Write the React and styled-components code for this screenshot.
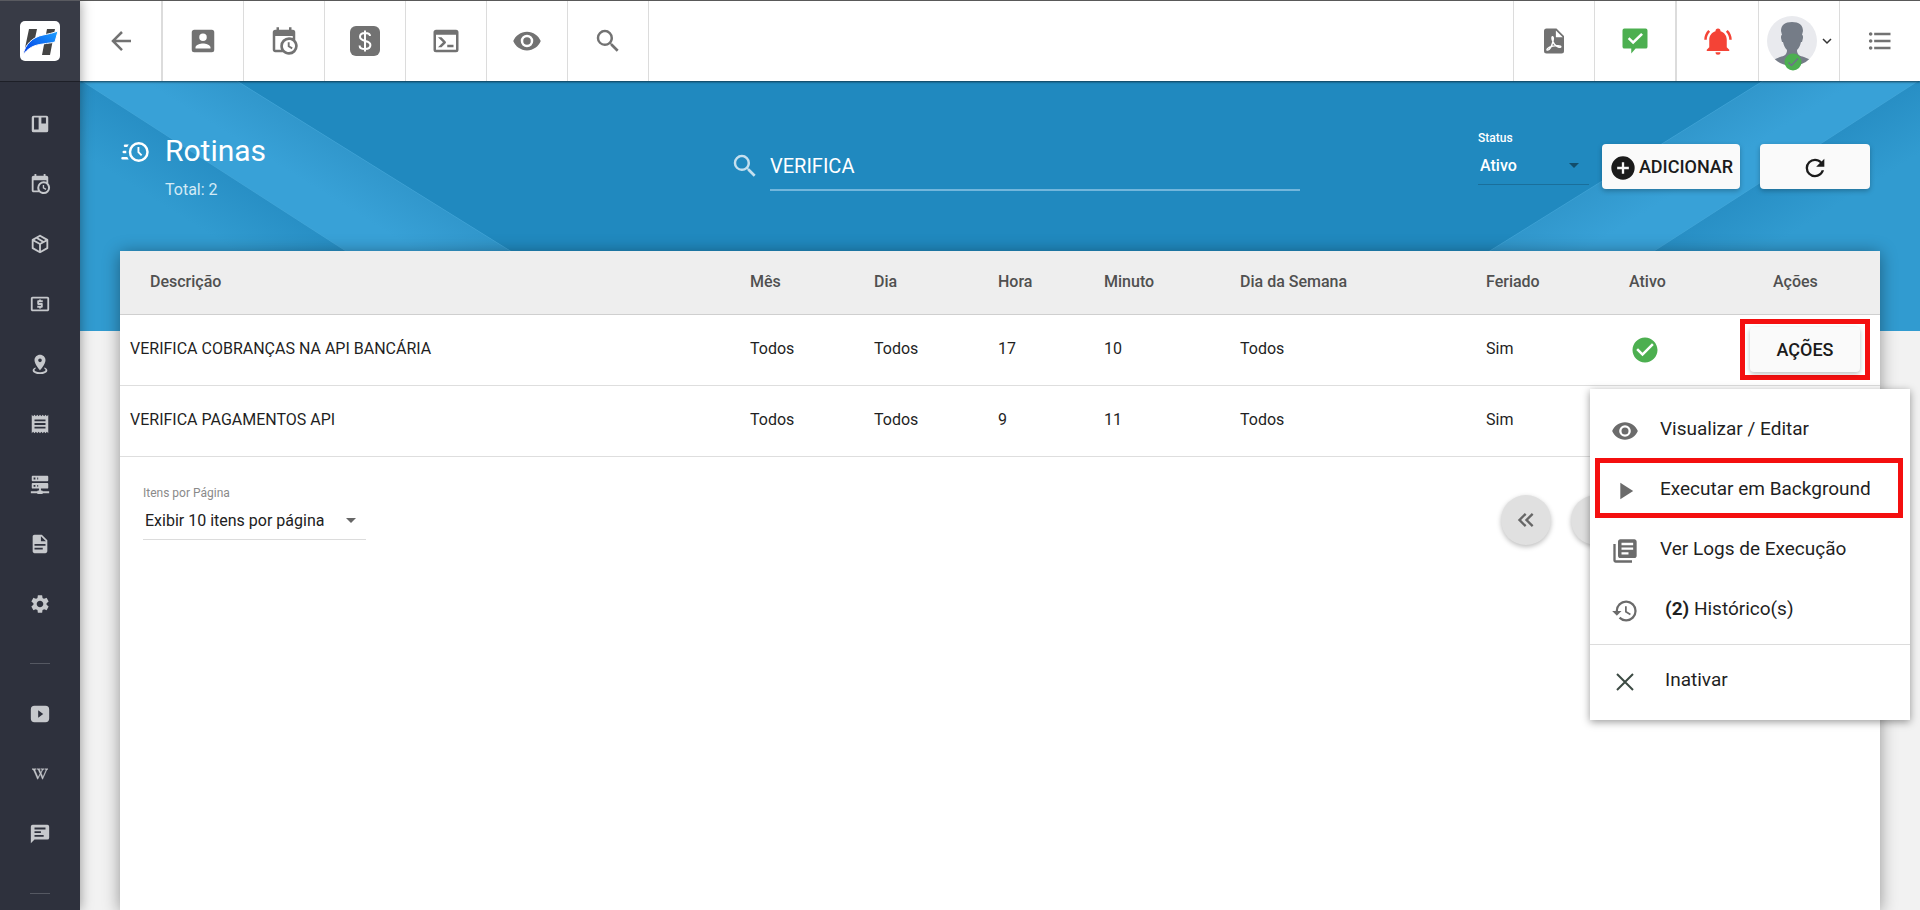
import React, { useState } from "react";
import styled, { createGlobalStyle } from "styled-components";
import {
  MdFormatListBulleted,
  MdHistory,
  MdLibraryBooks,
  MdPlayArrow,
  MdReceipt,
  MdLocalAtm,
  MdSettings,
} from "react-icons/md";
import { FaWikipediaW } from "react-icons/fa";

const GlobalStyle = createGlobalStyle`
  * {
    box-sizing: border-box;
  }
  body {
    margin: 0;
    background-color: #f2f2f2;
    color: #1f1f1f;
    font-family: Roboto, "Liberation Sans", sans-serif;
    font-size: 16px;
  }
  button, input, select {
    font-family: inherit;
    color: inherit;
  }
  svg {
    display: block;
    flex-shrink: 0;
  }
`;

const paths = {
  back: "M20,11V13H8L13.5,18.5L12.08,19.92L4.16,12L12.08,4.08L13.5,5.5L8,11H20Z",
  account:
    "M6,17C6,15 10,13.9 12,13.9C14,13.9 18,15 18,17V18H6M15,9A3,3 0 0,1 12,12A3,3 0 0,1 9,9A3,3 0 0,1 12,6A3,3 0 0,1 15,9M3,5V19A2,2 0 0,0 5,21H19A2,2 0 0,0 21,19V5A2,2 0 0,0 19,3H5C3.89,3 3,3.9 3,5Z",
  calendar:
    "M15,13H16.5V15.82L18.94,17.23L18.19,18.53L15,16.69V13M19,8H5V19H9.67C9.24,18.09 9,17.07 9,16A7,7 0 0,1 16,9C17.07,9 18.09,9.24 19,9.67V8M5,21C3.89,21 3,20.1 3,19V5C3,3.89 3.89,3 5,3H6V1H8V3H16V1H18V3H19A2,2 0 0,1 21,5V11.1C22.24,12.36 23,14.09 23,16A7,7 0 0,1 16,23C14.09,23 12.36,22.24 11.1,21H5M16,11.15A4.85,4.85 0 0,0 11.15,16C11.15,18.68 13.32,20.85 16,20.85A4.85,4.85 0 0,0 20.85,16C20.85,13.32 18.68,11.15 16,11.15Z",
  console:
    "M20,19V7H4V19H20M20,3A2,2 0 0,1 22,5V19A2,2 0 0,1 20,21H4A2,2 0 0,1 2,19V5C2,3.89 2.9,3 4,3H20M13,17V15H18V17H13M9.58,13L5.57,9H8.4L11.7,12.3C12.09,12.69 12.09,13.33 11.7,13.72L8.42,17H5.59L9.58,13Z",
  eye: "M12,9A3,3 0 0,0 9,12A3,3 0 0,0 12,15A3,3 0 0,0 15,12A3,3 0 0,0 12,9M12,17A5,5 0 0,1 7,12A5,5 0 0,1 12,7A5,5 0 0,1 17,12A5,5 0 0,1 12,17M12,4.5C7,4.5 2.73,7.61 1,12C2.73,16.39 7,19.5 12,19.5C17,19.5 21.27,16.39 23,12C21.27,7.61 17,4.5 12,4.5Z",
  magnify:
    "M9.5,3A6.5,6.5 0 0,1 16,9.5C16,11.11 15.41,12.59 14.44,13.73L14.71,14H15.5L20.5,19L19,20.5L14,15.5V14.71L13.73,14.44C12.59,15.41 11.11,16 9.5,16A6.5,6.5 0 0,1 3,9.5A6.5,6.5 0 0,1 9.5,3M9.5,5C7,5 5,7 5,9.5C5,12 7,14 9.5,14C12,14 14,12 14,9.5C14,7 12,5 9.5,5Z",
  messageCheck:
    "M3.5,2H20.5A1.5,1.5 0 0,1 22,3.5V16.5A1.5,1.5 0 0,1 20.5,18H12.5L9,22V18H3.5A1.5,1.5 0 0,1 2,16.5V3.5A1.5,1.5 0 0,1 3.5,2M10.5,14.6L18.4,7L16.9,5.5L10.5,11.7L7.6,8.9L6.2,10.3L10.5,14.6Z",
  bell: "M21,19V20H3V19L5,17V11C5,7.9 7.03,5.17 10,4.29C10,4.19 10,4.1 10,4A2,2 0 0,1 12,2A2,2 0 0,1 14,4C14,4.1 14,4.19 14,4.29C16.97,5.17 19,7.9 19,11V17L21,19M14,21A2,2 0 0,1 12,23A2,2 0 0,1 10,21M19.75,3.19L18.33,4.61C20.04,6.3 21,8.6 21,11H23C23,8.07 21.84,5.25 19.75,3.19M1,11H3C3,8.6 3.96,6.3 5.67,4.61L4.25,3.19C2.16,5.25 1,8.07 1,11Z",
  board:
    "M5,3H19A2,2 0 0,1 21,5V19A2,2 0 0,1 19,21H5A2,2 0 0,1 3,19V5A2,2 0 0,1 5,3M5.5,5V18H10.5V5H5.5M13.5,5V11.5H18.5V5H13.5Z",
  box: "M21,16.5C21,16.88 20.79,17.21 20.47,17.38L12.57,21.82C12.41,21.94 12.21,22 12,22C11.79,22 11.59,21.94 11.43,21.82L3.53,17.38C3.21,17.21 3,16.88 3,16.5V7.5C3,7.12 3.21,6.79 3.53,6.62L11.43,2.18C11.59,2.06 11.79,2 12,2C12.21,2 12.41,2.06 12.57,2.18L20.47,6.62C20.79,6.79 21,7.12 21,7.5V16.5M12,4.15L10.11,5.22L16,8.61L17.96,7.5L12,4.15M6.04,7.5L12,10.85L13.96,9.75L8.08,6.35L6.04,7.5M5,15.91L11,19.29V12.58L5,9.21V15.91M19,15.91V9.21L13,12.58V19.29L19,15.91Z",
  marker:
    "M12,2C15.31,2 18,4.66 18,7.95C18,12.41 12,19 12,19S6,12.41 6,7.95C6,4.66 8.69,2 12,2M12,6A2,2 0 0,0 10,8A2,2 0 0,0 12,10A2,2 0 0,0 14,8A2,2 0 0,0 12,6M20,19C20,21.21 16.42,23 12,23C7.58,23 4,21.21 4,19C4,17.71 5.22,16.56 7.11,15.83L7.75,16.74C6.67,17.19 6,17.81 6,18.5C6,19.88 8.69,21 12,21C15.31,21 18,19.88 18,18.5C18,17.81 17.33,17.19 16.25,16.74L16.89,15.83C18.78,16.56 20,17.71 20,19Z",
  server:
    "M13,19H14A1,1 0 0,1 15,20H22V22H15A1,1 0 0,1 14,23H10A1,1 0 0,1 9,22H2V20H9A1,1 0 0,1 10,19H11V17H4A1,1 0 0,1 3,16V12A1,1 0 0,1 4,11H20A1,1 0 0,1 21,12V16A1,1 0 0,1 20,17H13V19M4,3H20A1,1 0 0,1 21,4V8A1,1 0 0,1 20,9H4A1,1 0 0,1 3,8V4A1,1 0 0,1 4,3M9,7H10V5H9V7M9,15H10V13H9V15M5,5V7H7V5H5M5,13V15H7V13H5Z",
  file: "M13,9H18.5L13,3.5V9M6,2H14L20,8V20A2,2 0 0,1 18,22H6C4.89,22 4,21.1 4,20V4C4,2.89 4.89,2 6,2M15,18V16H6V18H15M18,14V12H6V14H18Z",
  video:
    "M6,3H18A4,4 0 0,1 22,7V17A4,4 0 0,1 18,21H6A4,4 0 0,1 2,17V7A4,4 0 0,1 6,3M10,8V16L15.5,12L10,8Z",
  message:
    "M4,2H20A2,2 0 0,1 22,4V16A2,2 0 0,1 20,18H6L2,22V4A2,2 0 0,1 4,2M6,5V7H18V5H6M6,9V11H13V9H6M6,13V15H16V13H6Z",
  clockFast:
    "M15,4A8,8 0 0,1 23,12A8,8 0 0,1 15,20A8,8 0 0,1 7,12A8,8 0 0,1 15,4M15,6A6,6 0 0,0 9,12A6,6 0 0,0 15,18A6,6 0 0,0 21,12A6,6 0 0,0 15,6M14,8H15.5V11.78L17.83,14.11L16.77,15.17L14,12.4V8M2,18A1,1 0 0,1 1,17A1,1 0 0,1 2,16H5.83C6.14,16.71 6.54,17.38 7,18H2M3,13A1,1 0 0,1 2,12A1,1 0 0,1 3,11H5.05L5,12L5.05,13H3M4,8A1,1 0 0,1 3,7A1,1 0 0,1 4,6H7C6.54,6.62 6.14,7.29 5.83,8H4Z",
  plusCircle:
    "M17,13H13V17H11V13H7V11H11V7H13V11H17M12,2A10,10 0 0,0 2,12A10,10 0 0,0 12,22A10,10 0 0,0 22,12A10,10 0 0,0 12,2Z",
  checkCircle:
    "M12 2C6.5 2 2 6.5 2 12S6.5 22 12 22 22 17.5 22 12 17.5 2 12 2M10 17L5 12L6.41 10.59L10 14.17L17.59 6.58L19 8L10 17Z",
  refresh:
    "M17.65,6.35C16.2,4.9 14.21,4 12,4A8,8 0 0,0 4,12A8,8 0 0,0 12,20C15.73,20 18.84,17.45 19.73,14H17.65C16.83,16.33 14.61,18 12,18A6,6 0 0,1 6,12A6,6 0 0,1 12,6C13.66,6 15.14,6.69 16.22,7.78L13,11H20V4L17.65,6.35Z",
  first:
    "M18.41,7.41L17,6L11,12L17,18L18.41,16.59L13.83,12L18.41,7.41M12.41,7.41L11,6L5,12L11,18L12.41,16.59L7.83,12L12.41,7.41Z",
  prev: "M15.41,16.58L10.83,12L15.41,7.41L14,6L8,12L14,18L15.41,16.58Z",
  next: "M8.59,16.58L13.17,12L8.59,7.41L10,6L16,12L10,18L8.59,16.58Z",
  last: "M5.59,7.41L7,6L13,12L7,18L5.59,16.59L10.17,12L5.59,7.41M11.59,7.41L13,6L19,12L13,18L11.59,16.59L16.17,12L11.59,7.41Z",
};

const Icon = ({ name, size = 30 }) => (
  <svg width={size} height={size} viewBox="0 0 24 24" aria-hidden="true">
    <path d={paths[name]} fill="currentColor" fillRule="evenodd" />
  </svg>
);

const DollarIcon = () => (
  <svg width="30" height="30" viewBox="0 0 30 30" aria-hidden="true">
    <rect width="30" height="30" rx="6" fill="currentColor" />
    <path
      d="M15 4.5v21M20 10c0-2-2-3-5-3s-5 1.3-5 3.8c0 5.700 10.400 2.600 10.400 8.200 0 2.700-2.400 4-5.400 4s-5.400-1.300-5.400-3.600"
      fill="none"
      stroke="#fff"
      strokeWidth="2"
    />
  </svg>
);

const PdfIcon = () => (
  <svg width="30" height="30" viewBox="0 0 24 24" aria-hidden="true">
    <path
      d="M6 2h8l6 6v12a2 2 0 0 1-2 2H6a2 2 0 0 1-2-2V4a2 2 0 0 1 2-2zM13.500 3.500V9H19z"
      fill="currentColor"
      fillRule="evenodd"
    />
    <path
      d="M10.700 8.500c1.200 0 .8 2.200.4 3.800.8 2.200 2.200 3.300 3.400 3.900M11.300 12c-.8 3-2.700 7-4.300 7.300-1.500.2-.5-2.300 4-3.200 2.500-.5 6.500-.6 6.500.5s-2.600.3-4-.8c-1.500-1.200-3-4.300-3.200-6.200 0-.7.100-1.100.4-1.100z"
      fill="none"
      stroke="#fff"
      strokeWidth="1.100"
    />
  </svg>
);

const CloseIcon = () => (
  <svg width="28" height="28" viewBox="0 0 28 28" aria-hidden="true">
    <path d="M6 6l16 16M22 6L6 22" stroke="#3c4a43" strokeWidth="2" />
  </svg>
);

const ChevronIcon = () => (
  <svg width="10" height="8" viewBox="0 0 10 8" aria-hidden="true">
    <path d="M1 2l4 4 4-4" fill="none" stroke="#333" strokeWidth="1.500" />
  </svg>
);

const OnlineIcon = () => (
  <svg width="18" height="18" viewBox="0 0 18 18" aria-hidden="true">
    <circle cx="9" cy="9" r="8.500" fill="#4caf50" />
    <path d="M4.500 9.500l3 3 6.500-7" fill="none" stroke="#6f6f8c" strokeWidth="1.400" />
  </svg>
);

const LogoMark = () => (
  <svg width="40" height="40" viewBox="0 0 40 40" aria-hidden="true">
    <defs>
      <linearGradient id="swoosh" x1="0" y1="1" x2="1" y2="0">
        <stop offset="0" stopColor="#0038e0" />
        <stop offset="0.600" stopColor="#1278f5" />
        <stop offset="1" stopColor="#1fa2ff" />
      </linearGradient>
    </defs>
    <rect width="40" height="40" rx="5" fill="#fff" />
    <path d="M9 8h8l-3 14-9 5zM27 8h8l-5 26h-8z" fill="#444" />
    <path
      d="M3 34C5 23 13 16 23 14c5-1 10-2 15-4l-3 11c-3 1-7 1-12 2C14 24 8 27 3 34z"
      fill="url(#swoosh)"
      stroke="#fff"
      strokeWidth="1"
    />
  </svg>
);

const AvatarPicture = () => (
  <svg width="50" height="50" viewBox="0 0 50 50" aria-hidden="true">
    <defs>
      <clipPath id="face">
        <circle cx="25" cy="25" r="25" />
      </clipPath>
    </defs>
    <g clipPath="url(#face)">
      <rect width="50" height="50" fill="#e9eaee" />
      <path
        d="M14 15c0-6 4-9 11-9s11 3 11 9l-1 4c1 0 1 1 1 3l-1 4h-1c-1 4-2 6-4 8 0 5 3 6 7 7l7 3-5 6H10l-4-6 7-3c4-1 7-2 7-7-2-2-3-4-4-8h-1l-1-4c0-2 0-3 1-3z"
        fill="#757c87"
      />
    </g>
  </svg>
);

const Shell = styled.div`
  display: flex;
  height: 100vh;
  overflow: hidden;
`;

const Sidebar = styled.aside`
  display: flex;
  flex-direction: column;
  flex: 0 0 80px;
  overflow: hidden;
  background-color: #2e313d;
  color: #c6c8cc;
  box-shadow: 0 0 12px rgba(0, 0, 0, 0.4);
  z-index: 3;
`;

const LogoLink = styled.a`
  display: flex;
  align-items: center;
  justify-content: center;
  flex: 0 0 82px;
  background-color: #383b46;
  border-top: 1px solid #595a60;
  border-bottom: 1px solid #1d1f27;
`;

const SideNav = styled.nav`
  display: flex;
  flex-direction: column;
  padding-top: 12px;
`;

const SideLink = styled.a`
  display: flex;
  align-items: center;
  justify-content: center;
  height: 60px;
  color: inherit;
`;

const WikiIcon = styled(FaWikipediaW)`
  stroke: currentColor;
  stroke-width: 16px;
`;

const SideDivider = styled.hr`
  width: 20px;
  height: 1px;
  margin: 29px auto 20px;
  border: 0;
  background-color: #555862;
`;

const Main = styled.div`
  display: flex;
  flex-direction: column;
  flex: 1;
  min-width: 0;
`;

const TopBar = styled.header`
  display: flex;
  justify-content: space-between;
  flex: 0 0 81px;
  background-color: #fff;
  border-top: 1px solid #595959;
  box-shadow: 0 1px 2px rgba(0, 0, 0, 0.6);
  z-index: 2;
`;

const TopGroup = styled.div`
  display: flex;
`;

const TopButton = styled.button`
  display: flex;
  align-items: center;
  justify-content: center;
  gap: 5px;
  width: ${(props) => (props.$thick ? "83px" : "81px")};
  padding: 0;
  border: 0;
  border-${(props) => props.$side}: ${(props) => (props.$thick ? "2px" : "1px")} solid #dcdcdc;
  background: none;
  color: ${(props) => props.$color || "#727272"};
`;

const Avatar = styled.span`
  position: relative;
`;

const OnlineBadge = styled.span`
  position: absolute;
  left: 17px;
  bottom: -5px;
`;

const Hero = styled.section`
  position: relative;
  height: 250px;
  flex-shrink: 0;
  background-color: #319bd0;
  color: #fff;
`;

const HeroArt = styled.svg`
  position: absolute;
  inset: 0;
  width: 100%;
  height: 100%;
`;

const HeroContent = styled.div`
  position: relative;
  display: grid;
  grid-template-columns: 1fr 570px 570px;
  height: 170px;
  padding: 0 50px 0 40px;
`;

const TitleArea = styled.div`
  display: flex;
  gap: 15px;
  padding-top: 52px;
`;

const TitleIcon = styled.span`
  padding-top: 4px;
`;

const Title = styled.h1`
  margin: 0;
  font-size: 30px;
  line-height: 36px;
  font-weight: 400;
`;

const Total = styled.p`
  margin: 11px 0 0;
  font-size: 16px;
  line-height: 20px;
  color: #d3eaf6;
`;

const SearchArea = styled.label`
  display: flex;
  align-items: flex-start;
  gap: 10px;
  padding-top: 70px;
  color: #c5e0ef;
`;

const SearchInput = styled.input`
  flex: 1;
  min-width: 0;
  height: 40px;
  padding: 0 0 9px;
  border: 0;
  border-bottom: 2px solid #72b6dc;
  outline: none;
  background: none;
  color: #fff;
  font-size: 20px;
`;

const HeroActions = styled.div`
  display: flex;
  justify-content: flex-end;
  padding-top: 48px;
`;

const Field = styled.label`
  display: flex;
  flex-direction: column;
  width: ${(props) => props.$width};
  font-size: 12px;
  line-height: 18px;
  font-weight: ${(props) => (props.$light ? 400 : 500)};
  color: ${(props) => (props.$light ? "#8a8a8a" : "#fff")};
`;

const SelectBox = styled.span`
  display: flex;
  align-items: center;
  height: 38px;
  padding-right: 10px;
  border-bottom: 1px solid ${(props) => (props.$light ? "#dcdcdc" : "#1a6f9b")};
  color: ${(props) => (props.$light ? "#212121" : "#fff")};

  &::after {
    content: "";
    border: 5px solid transparent;
    border-top-color: ${(props) => (props.$light ? "#666" : "#124d6b")};
    border-bottom: 0;
  }
`;

const Select = styled.select`
  flex: 1;
  min-width: 0;
  padding: 0 0 0 2px;
  border: 0;
  appearance: none;
  background: none;
  font-size: 16px;
  font-weight: inherit;

  option {
    color: #212121;
  }
`;

const RaisedButton = styled.button`
  display: flex;
  align-items: center;
  justify-content: center;
  gap: 2px;
  width: ${(props) => props.$width || "110px"};
  height: 45px;
  padding: 0;
  border: 0;
  border-radius: 4px;
  background-color: #fafafa;
  color: #1b1b1b;
  font-size: 18px;
  font-weight: 500;
  box-shadow: 0 2px 5px rgba(0, 0, 0, 0.26);
`;

const ButtonIcon = styled.span`
  padding-top: 3px;
`;

const ButtonRow = styled.div`
  display: flex;
  gap: 20px;
  padding: 15px 0 0 13px;
`;

const Card = styled.section`
  position: relative;
  flex: 1 0 auto;
  margin: -80px 40px 0;
  background-color: #fff;
  box-shadow: 0 2px 16px rgba(0, 0, 0, 0.4);
`;

const Table = styled.table`
  width: 100%;
  table-layout: fixed;
  border-collapse: collapse;
`;

const Column = styled.col`
  width: ${(props) => props.$width};
`;

const HeadCell = styled.th`
  height: 63px;
  padding: 0 0 2px ${(props) => props.$indent || "10px"};
  border-bottom: 1px solid #cfcfcf;
  background-color: #eee;
  color: #505050;
  font-size: 16px;
  font-weight: 500;
  text-align: left;
`;

const Cell = styled.td`
  height: 71px;
  padding: 0 0 3px 10px;
  border-bottom: 1px solid #dedede;
  font-size: 16px;
`;

const StatusCell = styled(Cell)`
  padding: 0 0 0 11px;
  color: #4caf50;
`;

const ActionCell = styled(Cell)`
  padding: 0;
`;

const ActionAnchor = styled.div`
  position: relative;
  width: 130px;
`;

const ActionFrame = styled.div`
  padding: 3px 5px;
  border: 5px solid #f40f0f;
`;

const Menu = styled.ul`
  position: absolute;
  top: 70px;
  right: -40px;
  width: 320px;
  margin: 0;
  padding: 11px 0 9px;
  list-style: none;
  background-color: #fff;
  box-shadow: 0 2px 8px rgba(0, 0, 0, 0.4);
  z-index: 1;
`;

const MenuItem = styled.li`
  margin: ${(props) => (props.$marked ? "-2px 7px 2px 5px" : "0")};
  border: ${(props) => (props.$marked ? "5px solid #f40f0f" : "0")};
`;

const MenuButton = styled.button`
  display: flex;
  align-items: center;
  gap: 21px;
  width: 100%;
  height: ${(props) => (props.$marked ? "50px" : "60px")};
  padding: ${(props) => (props.$marked ? "5px 0 0 11px" : "1px 0 0 21px")};
  border: 0;
  background: none;
  color: #6b6b6b;
`;

const MenuText = styled.span`
  padding: 0 0 4px ${(props) => (props.$inset ? "5px" : "0")};
  color: #1f1f1f;
  font-size: 19px;
  line-height: 24px;
`;

const MenuDivider = styled.li`
  height: 1px;
  margin: 4px 0 6px;
  background-color: #dcdcdc;
`;

const TableFooter = styled.div`
  display: flex;
  align-items: flex-start;
  justify-content: space-between;
  padding: 27px 119px 0 23px;
`;

const Pager = styled.nav`
  display: flex;
  gap: 20px;
  padding-top: 11px;
`;

const PagerButton = styled.button`
  display: flex;
  align-items: center;
  justify-content: center;
  width: 50px;
  height: 50px;
  padding: 0;
  border: 0;
  border-radius: 50%;
  background-color: #e0e0e0;
  color: #666;
  box-shadow: 0 2px 5px rgba(0, 0, 0, 0.26);
`;

const columns = [
  { label: "Descrição", indent: "30px" },
  { label: "Mês", width: "124px" },
  { label: "Dia", width: "124px" },
  { label: "Hora", width: "106px" },
  { label: "Minuto", width: "136px" },
  { label: "Dia da Semana", width: "246px" },
  { label: "Feriado", width: "143px" },
  { label: "Ativo", width: "121px" },
  { label: "Ações", width: "140px", indent: "33px" },
];

const routines = [
  {
    id: 1,
    values: ["VERIFICA COBRANÇAS NA API BANCÁRIA", "Todos", "Todos", "17", "10", "Todos", "Sim"],
  },
  {
    id: 2,
    values: ["VERIFICA PAGAMENTOS API", "Todos", "Todos", "9", "11", "Todos", "Sim"],
  },
];

const sideItems = [
  ["Painel", <Icon name="board" size={22} />],
  ["Agenda", <Icon name="calendar" size={22} />],
  ["Produtos", <Icon name="box" size={22} />],
  ["Financeiro", <MdLocalAtm size={22} />],
  ["Mapa", <Icon name="marker" size={22} />],
  ["Notas", <MdReceipt size={22} />],
  ["Servidores", <Icon name="server" size={22} />],
  ["Documentos", <Icon name="file" size={22} />],
  ["Configurações", <MdSettings size={22} />],
];

const helpItems = [
  ["Vídeos", <Icon name="video" size={22} />],
  ["Wiki", <WikiIcon size={16} />],
  ["Mensagens", <Icon name="message" size={22} />],
];

const SideLinks = ({ items }) =>
  items.map(([label, icon]) => (
    <SideLink key={label} href="#" aria-label={label}>
      {icon}
    </SideLink>
  ));

const HeroBackground = () => (
  <HeroArt viewBox="0 0 1840 250" preserveAspectRatio="xMidYMin slice" aria-hidden="true">
    <defs>
      <linearGradient id="band" gradientUnits="userSpaceOnUse" x1="292" y1="84" x2="266" y2="126">
        <stop offset="0" stopColor="#3197cc" />
        <stop offset="1" stopColor="#38a1d7" />
      </linearGradient>
      <linearGradient id="edge" gradientUnits="userSpaceOnUse" x1="132" y1="84" x2="100" y2="135">
        <stop offset="0" stopColor="#288fc5" />
        <stop offset="1" stopColor="#319bd0" />
      </linearGradient>
      <g id="ribbon">
        <path d="M2 0L390 250H0V0z" fill="url(#edge)" />
        <path d="M2 0H157L559 250H390z" fill="url(#band)" />
        <path d="M2 0L390 250M157 0L559 250" stroke="#46a8da" strokeWidth="1" opacity="0.600" />
      </g>
    </defs>
    <path d="M157 0H1683L1281 250H559z" fill="#2089bf" />
    <use href="#ribbon" />
    <use href="#ribbon" transform="matrix(-1 0 0 1 1840 0)" />
  </HeroArt>
);

const ActionsMenu = () => (
  <Menu>
    <MenuItem>
      <MenuButton type="button">
        <Icon name="eye" size={28} />
        <MenuText>Visualizar / Editar</MenuText>
      </MenuButton>
    </MenuItem>
    <MenuItem $marked>
      <MenuButton type="button" $marked>
        <MdPlayArrow size={28} />
        <MenuText>Executar em Background</MenuText>
      </MenuButton>
    </MenuItem>
    <MenuItem>
      <MenuButton type="button">
        <MdLibraryBooks size={28} />
        <MenuText>Ver Logs de Execução</MenuText>
      </MenuButton>
    </MenuItem>
    <MenuItem>
      <MenuButton type="button">
        <MdHistory size={28} />
        <MenuText $inset>
          <b>(2)</b> Histórico(s)
        </MenuText>
      </MenuButton>
    </MenuItem>
    <MenuDivider role="separator" />
    <MenuItem>
      <MenuButton type="button">
        <CloseIcon />
        <MenuText $inset>Inativar</MenuText>
      </MenuButton>
    </MenuItem>
  </Menu>
);

const App = () => {
  const [search, setSearch] = useState("VERIFICA");
  const [openRow, setOpenRow] = useState(1);

  const toggleMenu = (id) => {
    setOpenRow(openRow === id ? null : id);
  };

  return (
    <>
      <GlobalStyle />
      <Shell>
        <Sidebar>
          <LogoLink href="#" aria-label="Início">
            <LogoMark />
          </LogoLink>
          <SideNav>
            <SideLinks items={sideItems} />
            <SideDivider />
            <SideLinks items={helpItems} />
            <SideDivider />
          </SideNav>
        </Sidebar>

        <Main>
          <TopBar>
            <TopGroup>
              <TopButton $side="right" $thick aria-label="Voltar">
                <Icon name="back" />
              </TopButton>
              <TopButton $side="right" aria-label="Clientes">
                <Icon name="account" />
              </TopButton>
              <TopButton $side="right" aria-label="Agenda">
                <Icon name="calendar" />
              </TopButton>
              <TopButton $side="right" aria-label="Financeiro">
                <DollarIcon />
              </TopButton>
              <TopButton $side="right" aria-label="Terminal">
                <Icon name="console" />
              </TopButton>
              <TopButton $side="right" aria-label="Monitorar">
                <Icon name="eye" />
              </TopButton>
              <TopButton $side="right" aria-label="Pesquisar">
                <Icon name="magnify" />
              </TopButton>
            </TopGroup>
            <TopGroup>
              <TopButton $side="left" aria-label="Relatórios">
                <PdfIcon />
              </TopButton>
              <TopButton $side="left" $color="#4caf50" aria-label="Mensagens">
                <Icon name="messageCheck" />
              </TopButton>
              <TopButton $side="left" $thick $color="#f44336" aria-label="Notificações">
                <Icon name="bell" />
              </TopButton>
              <TopButton $side="left" aria-label="Usuário">
                <Avatar>
                  <AvatarPicture />
                  <OnlineBadge>
                    <OnlineIcon />
                  </OnlineBadge>
                </Avatar>
                <ChevronIcon />
              </TopButton>
              <TopButton $side="left" aria-label="Lista">
                <MdFormatListBulleted size={28} />
              </TopButton>
            </TopGroup>
          </TopBar>

          <Hero>
            <HeroBackground />
            <HeroContent>
              <TitleArea>
                <TitleIcon>
                  <Icon name="clockFast" />
                </TitleIcon>
                <div>
                  <Title>Rotinas</Title>
                  <Total>Total: 2</Total>
                </div>
              </TitleArea>
              <SearchArea>
                <Icon name="magnify" />
                <SearchInput
                  aria-label="Pesquisar rotinas"
                  value={search}
                  onChange={(e) => setSearch(e.target.value)}
                />
              </SearchArea>
              <HeroActions>
                <Field $width="111px">
                  Status
                  <SelectBox>
                    <Select defaultValue="Ativo">
                      <option>Ativo</option>
                      <option>Inativo</option>
                    </Select>
                  </SelectBox>
                </Field>
                <ButtonRow>
                  <RaisedButton type="button" $width="138px">
                    <ButtonIcon>
                      <Icon name="plusCircle" size={28} />
                    </ButtonIcon>
                    ADICIONAR
                  </RaisedButton>
                  <RaisedButton type="button" aria-label="Atualizar">
                    <ButtonIcon>
                      <Icon name="refresh" size={28} />
                    </ButtonIcon>
                  </RaisedButton>
                </ButtonRow>
              </HeroActions>
            </HeroContent>
          </Hero>

          <Card>
            <Table>
              <colgroup>
                {columns.map((column) => (
                  <Column key={column.label} $width={column.width} />
                ))}
              </colgroup>
              <thead>
                <tr>
                  {columns.map((column) => (
                    <HeadCell key={column.label} $indent={column.indent}>
                      {column.label}
                    </HeadCell>
                  ))}
                </tr>
              </thead>
              <tbody>
                {routines.map((routine) => (
                  <tr key={routine.id}>
                    {routine.values.map((value, i) => (
                      <Cell key={columns[i].label}>{value}</Cell>
                    ))}
                    <StatusCell>
                      <Icon name="checkCircle" />
                    </StatusCell>
                    <ActionCell>
                      {openRow === routine.id && (
                        <ActionAnchor>
                          <ActionFrame>
                            <RaisedButton type="button" onClick={() => toggleMenu(routine.id)}>
                              AÇÕES
                            </RaisedButton>
                          </ActionFrame>
                          <ActionsMenu />
                        </ActionAnchor>
                      )}
                    </ActionCell>
                  </tr>
                ))}
              </tbody>
            </Table>
            <TableFooter>
              <Field $width="223px" $light>
                Itens por Página
                <SelectBox $light>
                  <Select defaultValue="10">
                    <option value="10">Exibir 10 itens por página</option>
                    <option value="25">Exibir 25 itens por página</option>
                    <option value="50">Exibir 50 itens por página</option>
                  </Select>
                </SelectBox>
              </Field>
              <Pager aria-label="Paginação">
                <PagerButton type="button" aria-label="Primeira página">
                  <Icon name="first" size={28} />
                </PagerButton>
                <PagerButton type="button" aria-label="Página anterior">
                  <Icon name="prev" size={28} />
                </PagerButton>
                <PagerButton type="button" aria-label="Próxima página">
                  <Icon name="next" size={28} />
                </PagerButton>
                <PagerButton type="button" aria-label="Última página">
                  <Icon name="last" size={28} />
                </PagerButton>
              </Pager>
            </TableFooter>
          </Card>
        </Main>
      </Shell>
    </>
  );
};

export default App;
